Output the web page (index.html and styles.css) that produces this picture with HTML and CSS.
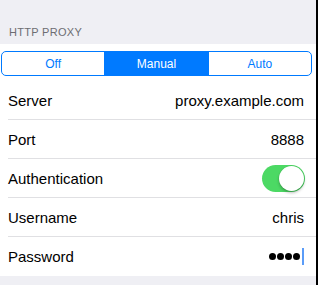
FILE: index.html
```html
<!DOCTYPE html>
<html>
<head>
<meta charset="utf-8">
<link rel="stylesheet" href="styles.css">
</head>
<body>
<div class="screen">
  <div class="header">HTTP PROXY</div>
  <div class="group">
    <div class="seg-cell">
      <div class="seg">
        <div class="seg-item">Off</div>
        <div class="seg-item active">Manual</div>
        <div class="seg-item">Auto</div>
      </div>
    </div>
    <div class="row"><span class="label">Server</span><span class="value">proxy.example.com</span></div>
    <div class="row"><span class="label">Port</span><span class="value">8888</span></div>
    <div class="row"><span class="label">Authentication</span><span class="toggle"><span class="knob"></span></span></div>
    <div class="row"><span class="label">Username</span><span class="value">chris</span></div>
    <div class="row last"><span class="label">Password</span><span class="dots"><span class="dot"></span><span class="dot"></span><span class="dot"></span><span class="dot"></span><span class="caret"></span></span></div>
  </div>
  <div class="footer">You can disable the use of a proxy server by selecting Off.</div>
</div>
</body>
</html>
```
FILE: styles.css
```css
html { background: #000; }
body { margin: 0; font-family: "Liberation Sans", Arial, sans-serif; }
.screen {
  width: 316px;
  height: 285px;
  overflow: hidden;
  background: #efeff4;
}
.header {
  height: 44px;
  box-sizing: border-box;
  display: flex;
  align-items: flex-end;
  padding: 0 0 6px 9px;
  font-size: 11px;
  color: #6d6d72;
  letter-spacing: 0.3px;
}
.group { background: #fff; }
.seg-cell { padding: 7px 4px 5px 1px; }
.seg {
  display: flex;
  height: 25px;
  box-sizing: border-box;
  border: 1px solid #007aff;
  border-radius: 5px;
  overflow: hidden;
}
.seg-item {
  flex: 1;
  display: flex;
  align-items: center;
  justify-content: center;
  font-size: 12px;
  color: #007aff;
}
.seg-item + .seg-item { border-left: 1px solid #007aff; }
.seg-item.active { background: #007aff; color: #fff; }
.row {
  height: 39px;
  box-sizing: border-box;
  margin-left: 8px;
  padding-right: 12px;
  border-bottom: 1px solid #e0e0e3;
  display: flex;
  align-items: center;
  justify-content: space-between;
  font-size: 15px;
  color: #000;
}
.row.last { border-bottom: none; }
.value { color: #000; }
.dots { display: flex; align-items: center; gap: 1px; }
.dot {
  width: 7px;
  height: 7px;
  border-radius: 50%;
  background: #000;
}
.caret {
  width: 2px;
  height: 17px;
  margin-left: 1px;
  background: #5a9cf8;
}
.toggle {
  width: 43px;
  height: 27px;
  border-radius: 14px;
  background: #4cd964;
  position: relative;
  margin-right: -1px;
}
.knob {
  position: absolute;
  right: 1px;
  top: 1px;
  width: 25px;
  height: 25px;
  border-radius: 50%;
  background: #fff;
  box-shadow: 0 2px 3px rgba(0,0,0,0.25), 0 0 0 0.5px rgba(0,0,0,0.08);
}
.footer {
  padding: 7px 9px 0;
  font-size: 11px;
  color: #6d6d72;
}
```
